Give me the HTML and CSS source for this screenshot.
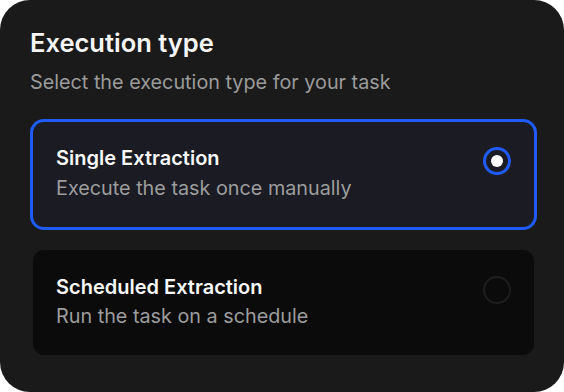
FILE: index.html
```html
<!DOCTYPE html>
<html>
<head>
<meta charset="utf-8">
<link rel="stylesheet" href="styles.css">
</head>
<body>
<div class="panel">
  <h1 class="title">Execution type</h1>
  <p class="subtitle">Select the execution type for your task</p>
  <div class="options">
    <div class="option selected">
      <div class="text">
        <div class="opt-title">Single Extraction</div>
        <div class="opt-desc">Execute the task once manually</div>
      </div>
      <span class="radio checked"></span>
    </div>
    <div class="option">
      <div class="text">
        <div class="opt-title">Scheduled Extraction</div>
        <div class="opt-desc">Run the task on a schedule</div>
      </div>
      <span class="radio"></span>
    </div>
  </div>
</div>
</body>
</html>
```
FILE: styles.css
```css
html, body {
  margin: 0;
  padding: 0;
  background: #ffffff;
}
body {
  font-family: Inter, "Noto Sans", sans-serif;
}
.panel {
  width: 564px;
  height: 392px;
  box-sizing: border-box;
  background: #1a1a1a;
  border-radius: 30px;
  padding: 28px 30px 0 30px;
}
.title {
  margin: 0;
  font-size: 25.5px;
  line-height: 30px;
  font-weight: 600;
  color: #f5f5f5;
}
.subtitle {
  margin: 10px 0 0 0;
  font-size: 19.8px;
  line-height: 28px;
  color: #9b9b9b;
}
.options {
  margin-top: 26px;
  padding-left: 3px;
  display: flex;
  flex-direction: column;
  gap: 23px;
}
.option {
  height: 105px;
  box-sizing: border-box;
  padding: 22px 23px 0 23px;
  border-radius: 11px;
  background: #0b0b0b;
  display: flex;
  justify-content: space-between;
  align-items: flex-start;
}
.option.selected {
  background: #1a1b23;
  box-shadow: 0 0 0 3px #1f5cf7;
}
.option + .option {
  padding-top: 23px;
}
.opt-title {
  font-size: 20px;
  line-height: 28px;
  font-weight: 600;
  color: #f7f7f7;
}
.opt-desc {
  margin-top: 2px;
  font-size: 19.8px;
  line-height: 28px;
  color: #9d9d9d;
}
.option + .option .opt-desc {
  margin-top: 1px;
}
.radio {
  margin-top: 3px;
  width: 28px;
  height: 28px;
  box-sizing: border-box;
  border-radius: 50%;
  border: 2px solid #1e1e1e;
  flex: none;
  display: flex;
  align-items: center;
  justify-content: center;
}
.radio.checked {
  border: 3px solid #1f5cf7;
}
.radio.checked::after {
  content: "";
  width: 12px;
  height: 12px;
  border-radius: 50%;
  background: #ffffff;
}
```
